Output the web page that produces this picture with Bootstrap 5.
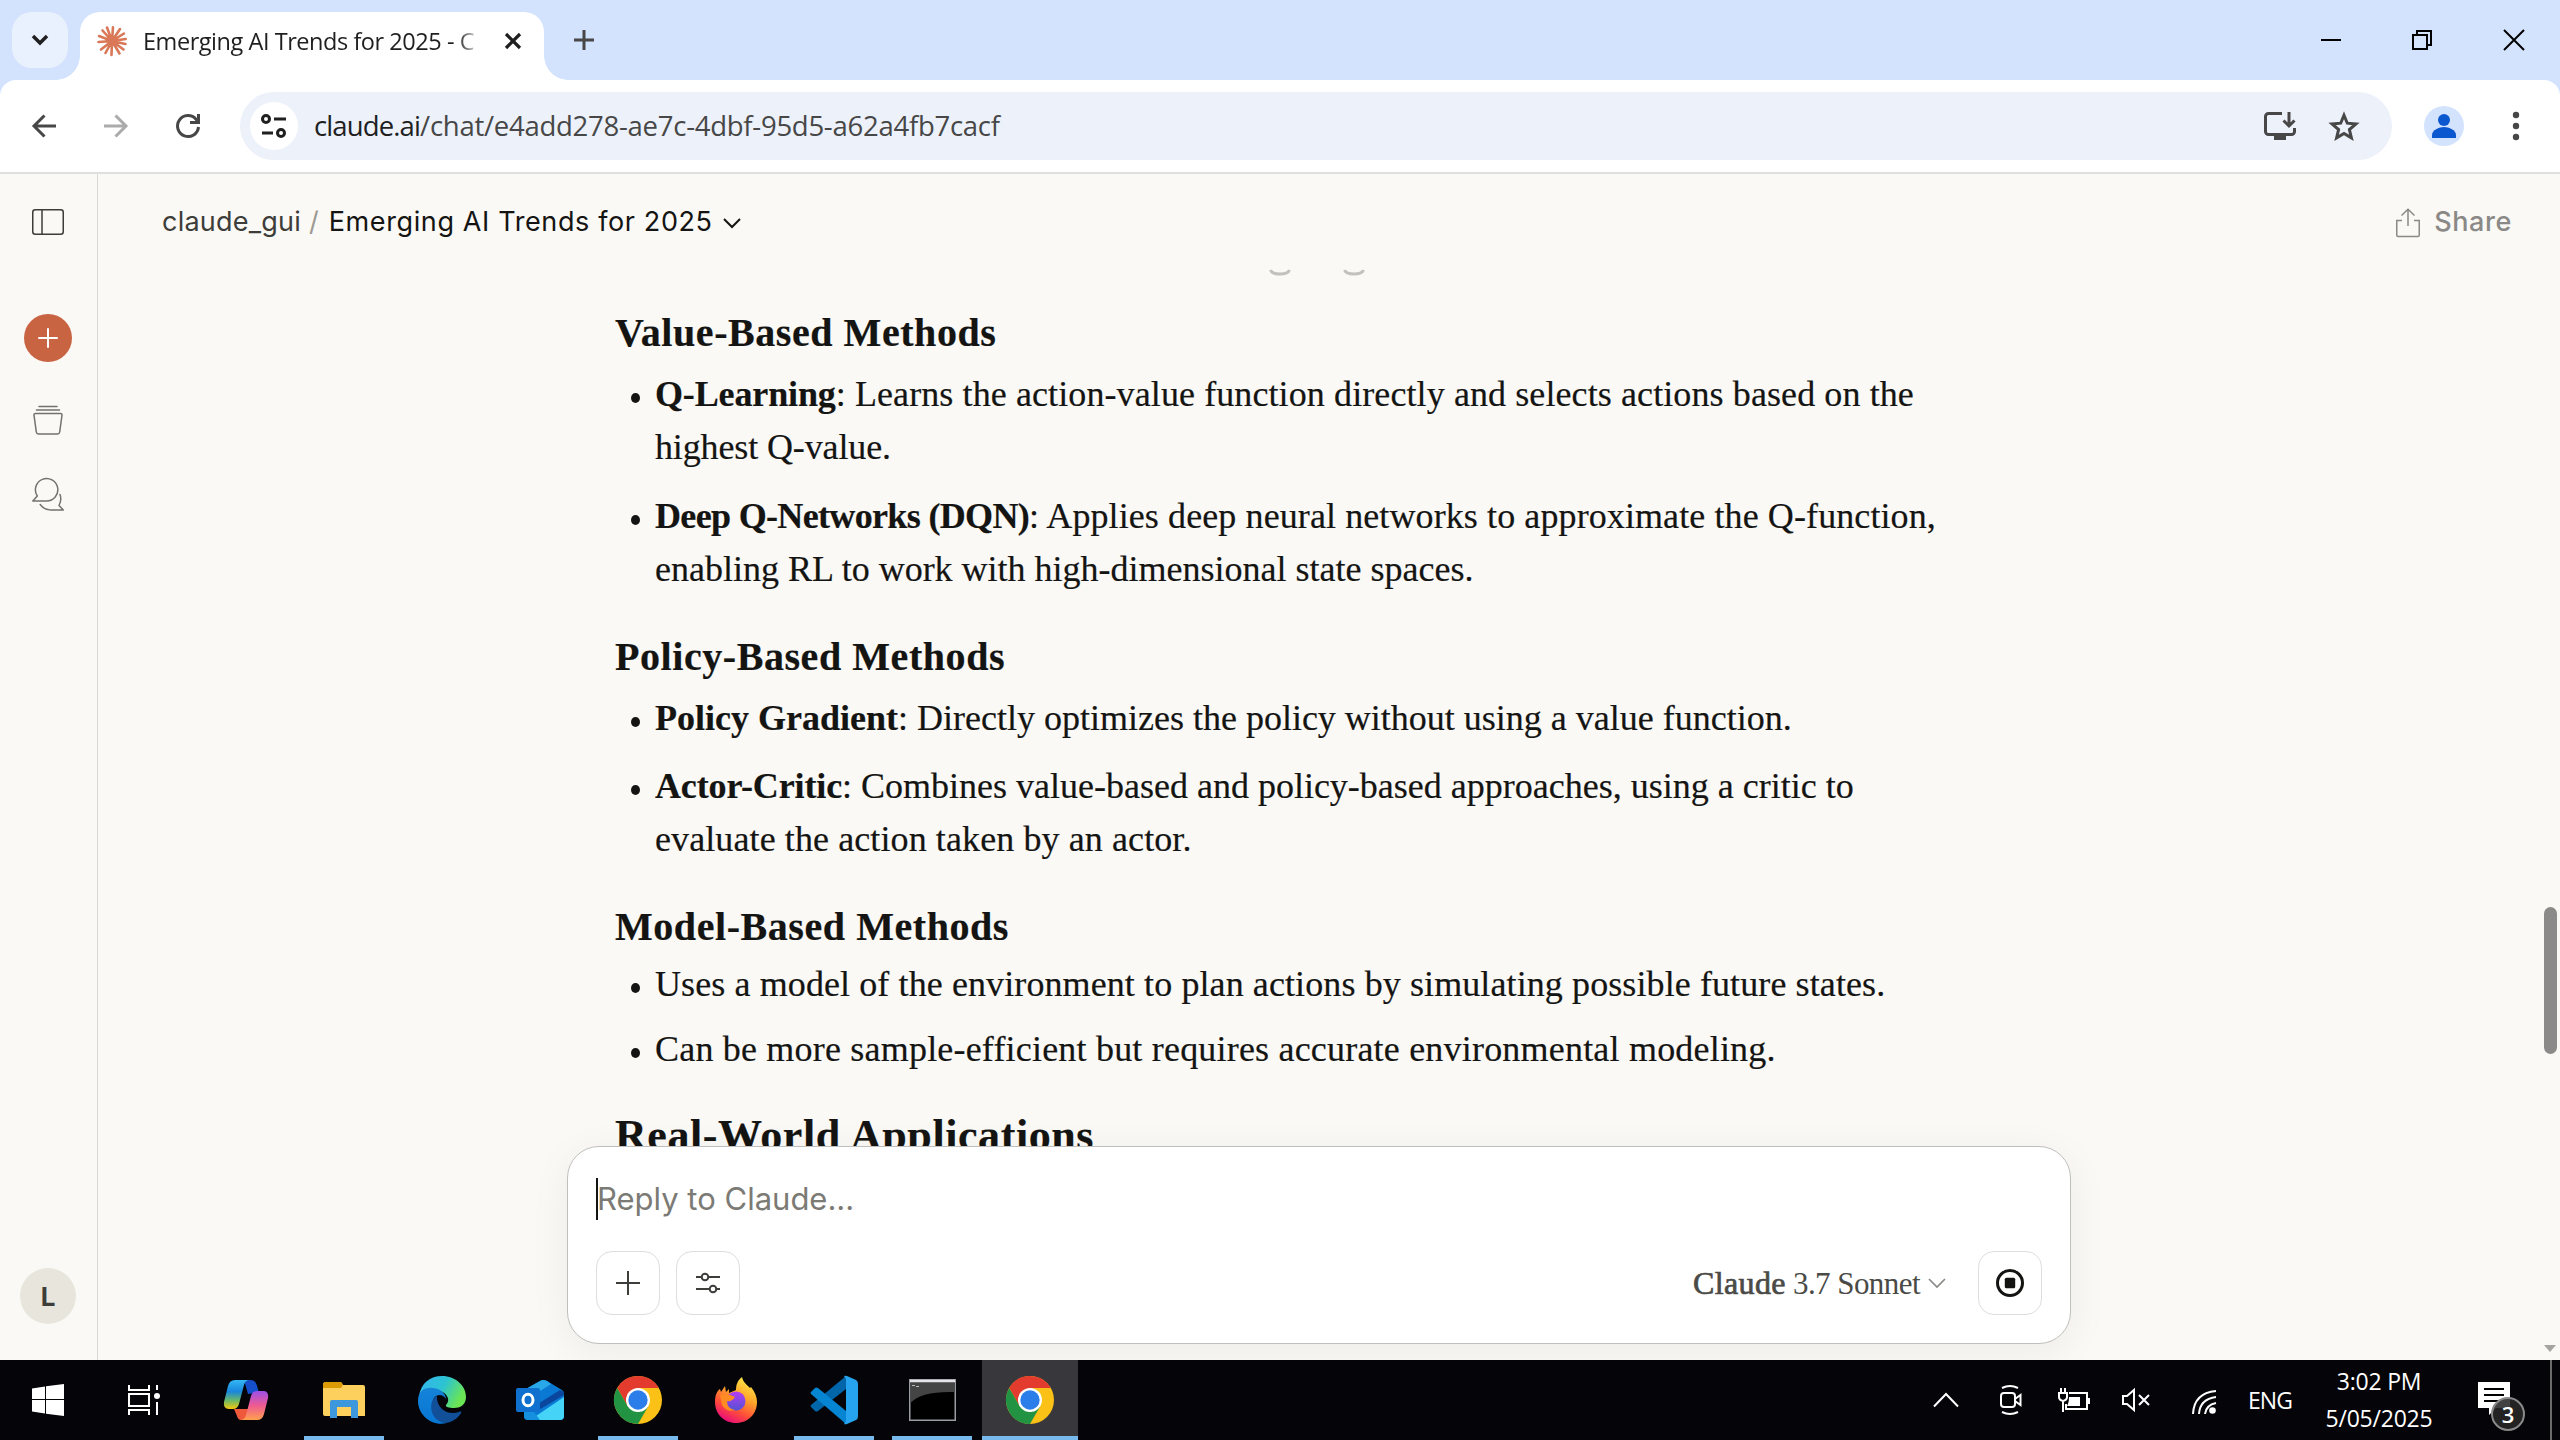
<!DOCTYPE html>
<html lang="en">
<head>
<meta charset="utf-8">
<title>Emerging AI Trends for 2025 - Claude</title>
<link rel="stylesheet" href="https://cdn.jsdelivr.net/npm/bootstrap@5.3.0/dist/css/bootstrap.min.css">
<script src="https://cdn.jsdelivr.net/npm/bootstrap@5.3.0/dist/js/bootstrap.bundle.min.js"></script>
<style>
html,body{height:1440px;width:2560px;overflow:hidden}
body{background:#faf9f5;color:#141413;font-family:"Open Sans","Noto Sans",sans-serif}
svg{display:block;flex:none;overflow:visible}
.fx{flex:none;white-space:nowrap}
.inter{font-family:Inter,sans-serif}
/* browser chrome */
.tabstrip{height:80px;background:#d3e3fd;padding-left:12px}
.tabsearch{width:56px;height:56px;border-radius:20px;background:#eaf1fe}
.wintab{width:464px;height:68px;margin-left:12px;background:#fff;border-radius:20px 20px 0 0;padding:0 23px 11px 17px}
.wintab::before,.wintab::after{content:"";position:absolute;bottom:0;width:24px;height:24px}
.wintab::before{left:-24px;background:radial-gradient(circle at 0 0,transparent 23.5px,#fff 24px)}
.wintab::after{right:-24px;background:radial-gradient(circle at 100% 0,transparent 23.5px,#fff 24px)}
.tabtitle{font-size:23.5px;line-height:34px;width:338px;margin-left:16px;letter-spacing:-.45px;color:#1f1f1f;-webkit-mask-image:linear-gradient(90deg,#000 314px,transparent 338px)}
.newtab{margin-left:30px}
.wincontrols{padding-right:36px;gap:72px}
.bar-wrap{background:#d3e3fd}
.toolbar{height:94px;background:#fff;border-radius:16px 16px 0 0;border-bottom:2px solid #e0e0e0;padding:0 36px 0 32px}
.nav-next{margin-left:48px}
.omni{width:2152px;height:68px;border-radius:34px;background:#ecf1fa;margin-left:40px;padding:0 33px 0 10px}
.site{width:48px;height:48px;background:#fff}
.url{font-size:27.500px;line-height:40px;color:#474747;margin:-1px auto 0 16px;letter-spacing:-.26px}
.url b{font-weight:400;color:#1f1f1f;letter-spacing:-.88px}
.star{margin-left:33px}
.profile{margin-left:32px}
/* application */
.rail{width:98px;border-right:1px solid #d9d8d2;padding:35px 1px 0 0}
.newchat{width:48px;height:48px;background:#c96442;margin-top:79px}
.rail-icon{margin-top:43px}
.avatar{width:56px;height:56px;margin-bottom:36px;background:#e8e6dc;font-size:26px;font-weight:700;color:#3d3d3a}
.apphead{height:97px;padding:0 48px 0 64px;font-size:27px}
.crumb{color:#3d3d3a;letter-spacing:.22px}
.slash{color:#9c9a92;margin:0 10px 0 8px}
.chat-title{letter-spacing:.62px}
.caret{margin-left:10px}
.share{margin-left:14px;font-weight:500;color:#8a8987;letter-spacing:.6px}
.prev-tail{left:1171px;top:96px}
.doc{padding:37px 0 0 517px;font-family:"Liberation Serif",serif;font-size:36px;line-height:53px;-webkit-text-stroke:.2px #141413}
.doc h3{font:700 40px/50px "Liberation Serif",serif;letter-spacing:.56px;margin:0}
.doc h2{font:700 44px/56px "Liberation Serif",serif;letter-spacing:.58px;margin:0}
.doc ul{list-style:none;margin:10px 0 36px;padding-left:40px}
.doc ul.tight{margin:6px 0 32px}
.doc li{position:relative}
.doc li::before{content:"";position:absolute;left:-24px;top:25px;width:9px;height:10px;border-radius:50%;background:#141413}
.doc li+li{margin-top:16px}
.doc ul.policy li+li{margin-top:15px}
.doc ul.tight li+li{margin-top:12px}
.ln{display:block;width:max-content;white-space:nowrap}
.w1{letter-spacing:.1px}.w2{letter-spacing:.2px}.n1{letter-spacing:-.13px}.n2{letter-spacing:-.66px}
.composer{position:absolute;left:469px;top:972px;width:1504px;height:198px;background:#fff;border:1px solid #bfbfbd;border-radius:32px;box-shadow:0 8px 40px rgba(0,0,0,.06);padding:0 28px}
.ph{font-size:31px;line-height:42px;color:#7b7a74;margin-top:31px;border-left:2px solid #141413}
.ph span{margin-left:-1px}
.tools{margin-top:31px}
.cbtn{width:64px;height:64px;border:1px solid #dededc;border-radius:16px;background:#fff}
.model{font-family:"Liberation Serif",serif;font-size:31px;line-height:40px;color:#4a4a47;letter-spacing:-.56px}
.model b{font-size:32px;font-weight:400;letter-spacing:.4px;margin-right:7px;-webkit-text-stroke:.7px #4a4a47}
.model-caret{margin:0 32px 0 8px}
.thumb{position:absolute;left:2446px;top:733px;width:13px;height:147px;border-radius:7px;background:#8b8a88}
.scroll-down{left:2446px;top:1171px}
/* taskbar */
.taskbar{height:80px;background:#040409;color:#fff}
.start{margin-left:32px}
.taskview{margin:0 46px 0 64px}
.app{width:80px;height:80px;margin-right:18px;padding-top:4px;border-bottom:4px solid transparent}
.app.run{border-color:#76b9ed}
.app.now{width:96px;margin-left:-8px;background:#38373c}
.tray{font-size:23px;line-height:37px}
.tray .lang{letter-spacing:-.9px}
.clock{margin:0 45px 0 33px;width:108px;letter-spacing:-.22px}
.notif{width:40px;height:52px}
.notif svg{margin-top:8px}
.bdg{position:absolute;left:13px;top:23px;width:34px;height:34px;border-radius:50%;background:rgba(40,40,40,.88);border:2px solid #8a8a8a;font-size:22px;line-height:30px;text-align:center;font-weight:600}
.showdesk{width:2px;height:80px;background:#6b6b6b;margin:0 8px 0 32px}
.t1{margin-right:41px}.t2{margin-right:36px}.t3{margin-right:32px}.t4{margin-right:42px}.t5{margin:4px 32px 0 0}
</style>
</head>
<body class="d-flex flex-column">
<svg width="0" height="0" class="position-absolute"><defs>
<g id="chrome"><circle cx="24" cy="24" r="24" fill="#fbc116"/><path d="M3.200 12A24 24 0 0 1 44.800 12H24L13.600 30Z" fill="#e33b2e"/><path d="M3.200 12A24 24 0 0 0 24 48L34.400 30 24 36 13.600 30Z" fill="#229342"/><circle cx="24" cy="24" r="12" fill="#fff"/><circle cx="24" cy="24" r="9.700" fill="#2b7de9"/></g>
</defs></svg>

<header>
 <div class="tabstrip d-flex align-items-center">
  <div class="tabsearch d-flex align-items-center justify-content-center"><svg width="16" height="10" fill="none" stroke="#1f1f1f" stroke-width="3.500"><path d="M1 1l7 7 7-7"/></svg></div>
  <div class="wintab position-relative align-self-end d-flex align-items-center">
   <svg width="30" height="30" viewBox="-15 -15 30 30" stroke="#d97757" stroke-width="2.600" stroke-linecap="round"><path d="M0 0L-5-13.500M0 0L1-13.800M0 0L8-12M0 0L12-7.500M0 0L13.700-2M0 0L13.500 3M0 0L11.500 8.500M0 0L7.500 12.500M0 0L-.5 14M0 0L-6.500 12M0 0L-11 8.500M0 0L-13.500 1M0 0L-13-5M0 0L-9.500-10.500"/></svg>
   <div class="tabtitle fx">Emerging AI Trends for 2025 - C</div>
   <svg class="ms-auto" width="16" height="16" stroke="#1f1f1f" stroke-width="3.200"><path d="M1 1l14 14M15 1L1 15"/></svg>
  </div>
  <svg class="newtab" width="20" height="20" stroke="#474747" stroke-width="3"><path d="M10 0v20M0 10h20"/></svg>
  <div class="wincontrols ms-auto d-flex align-items-center">
   <svg width="20" height="20" stroke="#000" stroke-width="2"><path d="M1 10h20"/></svg>
   <svg width="20" height="20" fill="none" stroke="#000" stroke-width="2"><path d="M1 5h14v14H1zM5 5V1h14v14h-4"/></svg>
   <svg width="20" height="20" stroke="#000" stroke-width="2"><path d="M0 0l20 20M20 0L0 20"/></svg>
  </div>
 </div>
 <div class="bar-wrap"><div class="toolbar d-flex align-items-center">
  <svg width="24" height="24" fill="none" stroke="#474747" stroke-width="3"><path d="M24 12H2M12.500 1.500L2 12l10.500 10.500"/></svg>
  <svg class="nav-next" width="24" height="24" fill="none" stroke="#ababab" stroke-width="3"><path d="M0 12h22M11.500 1.500L22 12 11.500 22.500"/></svg>
  <svg class="nav-next" width="24" height="24" fill="none" stroke="#474747" stroke-width="3"><path d="M22.500 13A10.500 10.500 0 1 1 20 5.200L22 8M22.500 0v8.500H14"/></svg>
  <div class="omni d-flex align-items-center">
   <div class="site rounded-circle d-flex align-items-center justify-content-center"><svg width="26" height="24" fill="none" stroke="#1f1f1f" stroke-width="3"><circle cx="5" cy="5" r="3.500"/><path d="M13 5h12M1 19h11"/><circle cx="20" cy="19" r="3.500"/></svg></div>
   <div class="url fx"><b>claude.ai</b>/chat/e4add278-ae7c-4dbf-95d5-a62a4fb7cacf</div>
   <svg width="32" height="28" fill="none" stroke="#474747" stroke-width="3"><path d="M18 1.500H4.500a3 3 0 0 0-3 3v15a3 3 0 0 0 3 3h23a3 3 0 0 0 3-3V16M25 0v14M19.500 8.500L25 14l5.500-5.500"/><path d="M10 23h12v5H10z" fill="#474747" stroke="none"/></svg>
   <svg class="star" width="30" height="29" fill="none" stroke="#474747" stroke-width="3"><path d="M15 3.200l3.300 8 8.600.7-6.500 5.600 2 8.400L15 21.400l-7.400 4.500 2-8.400L3.100 11.900l8.600-.7z"/></svg>
  </div>
  <svg class="profile" width="40" height="40"><circle cx="20" cy="20" r="20" fill="#d3e3fd"/><g fill="#0b57d0"><circle cx="20" cy="14" r="6"/><path d="M8 32v-3c0-5 7-8 12-8s12 3 12 8v3z"/></g></svg>
  <svg width="8" height="30" fill="#474747" class="ms-auto me-1"><circle cx="4" cy="4" r="3.200"/><circle cx="4" cy="15" r="3.200"/><circle cx="4" cy="26" r="3.200"/></svg>
 </div></div>
</header>

<div class="d-flex flex-grow-1 overflow-hidden">
 <nav class="rail fx d-flex flex-column align-items-center">
  <svg width="32" height="26" fill="none" stroke="#3d3d3a" stroke-width="1.500"><rect x=".75" y=".75" width="30.500" height="24.500" rx="2.500"/><path d="M10 1v24"/></svg>
  <div class="newchat rounded-circle d-flex align-items-center justify-content-center"><svg width="20" height="20" stroke="#fff" stroke-width="2" stroke-linecap="round"><path d="M10 1v18M1 10h18"/></svg></div>
  <svg class="rail-icon" width="30" height="30" fill="none" stroke="#73726c" stroke-width="1.500" stroke-linecap="round"><path d="M6 1.500h18M3.500 5h23M2.500 8.500h25q1.700 0 1.500 1.700L26.700 27q-.3 2-2 2H5.300q-1.700 0-2-2L1 10.200Q.8 8.500 2.500 8.500z"/></svg>
  <svg class="rail-icon" width="32" height="33" fill="none" stroke="#73726c" stroke-width="1.500" stroke-linejoin="round" stroke-linecap="round"><path d="M.8 23l4.500-5A11.200 11.200 0 1 1 14.500 23zM28 16.500q2 5-1 11l4.300 4.500H19q-7 0-10.800-5.500"/></svg>
  <div class="avatar inter rounded-circle d-flex align-items-center justify-content-center mt-auto">L</div>
 </nav>
 <main class="position-relative flex-grow-1">
  <div class="apphead inter d-flex align-items-center">
   <span class="crumb fx">claude_gui</span>
   <span class="slash fx">/</span>
   <span class="chat-title fx">Emerging AI Trends for 2025</span>
   <svg class="caret" width="18" height="10" fill="none" stroke="#141413" stroke-width="2"><path d="M1 1l8 8 8-8"/></svg>
   <svg class="ms-auto" width="24" height="30" fill="none" stroke="#8a8987" stroke-width="1.500"><path d="M6 12.500H.75V27a1.500 1.500 0 0 0 1.500 1.500h19.500a1.500 1.500 0 0 0 1.500-1.500V12.500H18M12 18V1.500M5.500 7.500L12 1.200l6.500 6.300"/></svg>
   <span class="share fx">Share</span>
  </div>
  <svg width="96" height="6" class="prev-tail position-absolute" fill="none" stroke="#c2c1bd" stroke-width="3"><path d="M1.500 0Q3 4 11 4T20.500 0M75.500 0Q77 4 85 4T94.500 0"/></svg>
  <article class="doc">
   <h3><span class="ln">Value-Based Methods</span></h3>
   <ul>
    <li><span class="ln"><b class="n1">Q-Learning</b><span class="w1">: Learns the action-value function directly and selects actions based on the</span></span><span class="ln n1">highest Q-value.</span></li>
    <li><span class="ln"><b class="n2">Deep Q-Networks (DQN)</b><span class="w1">: Applies deep neural networks to approximate the Q-function,</span></span><span class="ln">enabling RL to work with high-dimensional state spaces.</span></li>
   </ul>
   <h3><span class="ln">Policy-Based Methods</span></h3>
   <ul class="policy">
    <li><span class="ln"><b>Policy Gradient</b>: Directly optimizes the policy without using a value function.</span></li>
    <li><span class="ln"><b class="n1">Actor-Critic</b>: Combines value-based and policy-based approaches, using a critic to</span><span class="ln w1">evaluate the action taken by an actor.</span></li>
   </ul>
   <h3><span class="ln">Model-Based Methods</span></h3>
   <ul class="tight">
    <li><span class="ln w1">Uses a model of the environment to plan actions by simulating possible future states.</span></li>
    <li><span class="ln w2">Can be more sample-efficient but requires accurate environmental modeling.</span></li>
   </ul>
   <h2><span class="ln">Real-World Applications</span></h2>
  </article>
  <section class="composer">
   <div class="ph inter"><span>Reply to Claude...</span></div>
   <div class="tools d-flex align-items-center">
    <div class="cbtn d-flex align-items-center justify-content-center"><svg width="24" height="24" stroke="#3d3d3a" stroke-width="2"><path d="M12 0v24M0 12h24"/></svg></div>
    <div class="cbtn ms-3 d-flex align-items-center justify-content-center"><svg width="24" height="20" fill="none" stroke="#3d3d3a" stroke-width="2"><path d="M0 4h5.500M12.500 4H24M0 16h13.500M20.500 16H24"/><circle cx="9" cy="4" r="3.300"/><circle cx="17" cy="16" r="3.300"/></svg></div>
    <div class="model fx ms-auto"><b>Claude</b>3.7 Sonnet</div>
    <svg class="model-caret" width="18" height="10" fill="none" stroke="#8a8987" stroke-width="1.700"><path d="M1 1l8 8 8-8"/></svg>
    <div class="cbtn d-flex align-items-center justify-content-center"><svg width="28" height="28"><circle cx="14" cy="14" r="12.500" fill="none" stroke="#141413" stroke-width="3"/><rect x="8.800" y="8.800" width="10.400" height="10.400" rx="1.500" fill="#141413"/></svg></div>
   </div>
  </section>
  <div class="thumb"></div>
  <svg class="scroll-down position-absolute" width="12" height="7"><path d="M0 0h12L6 7z" fill="#a5a4a1"/></svg>
 </main>
</div>

<footer class="taskbar d-flex align-items-center">
 <svg class="start" width="32" height="32" fill="#fff"><path d="M0 4.500L13 2.500V15H0zM14 2.300L32 0v15H14zM0 16h13v13.500L0 27.500zM14 16h18v16l-18-2.300z"/></svg>
 <svg class="taskview" width="32" height="30" fill="none" stroke="#fff" stroke-width="2"><path d="M1 0v5h20V0M1 30v-5h20v5M1 9h20v12H1zM29 0v5M29 17v13"/><circle cx="29" cy="11" r="3" fill="#fff" stroke="none"/></svg>
 <div class="app d-flex align-items-center justify-content-center"><svg width="44" height="40"><defs><linearGradient id="c1" x2="0" y2="1"><stop stop-color="#32b7f5"/><stop offset=".4" stop-color="#1a86dc"/><stop offset=".7" stop-color="#68b868"/><stop offset="1" stop-color="#f5c80c"/></linearGradient><linearGradient id="c2" x2="0" y2="1"><stop stop-color="#9c4fe8"/><stop offset=".5" stop-color="#ee5a91"/><stop offset="1" stop-color="#ffa14d"/></linearGradient></defs><path d="M20 0h6c4 0 6 2 7 6l1.500 5H43L24 14z" fill="#1550ca"/><path d="M10 29h15l-2 7q-1 4-6 4-3 0-4-4z" fill="#f0583c"/><path d="M11 0h13q-3 1-4 5l-5 19q-1.500 5-6 5H5q-6 0-5-7L4 6q1.500-6 7-6z" fill="url(#c1)"/><path d="M33 11h6q6 0 5 7l-4 16q-1.500 6-7 6H17q4-1 5-5l5-19q1.500-5 6-5z" fill="url(#c2)"/></svg></div>
 <div class="app run d-flex align-items-center justify-content-center"><svg width="42" height="36"><path d="M0 10V3q0-3 3-3h14q2 0 3 3h20q2 0 2 2v29H2q-2 0-2-2z" fill="#fdcf5c"/><path d="M0 6V3q0-3 3-3h14q2 0 3 3l-2 3z" fill="#dc9a05"/><path d="M7 36V20q0-2 2-2h24q2 0 2 2v16h-7V25H14v11z" fill="#3d97dd"/></svg></div>
 <div class="app d-flex align-items-center justify-content-center"><svg width="48" height="48"><defs><linearGradient id="e1" x2="1" y2=".4"><stop stop-color="#35b5f0"/><stop offset=".55" stop-color="#2cc3d2"/><stop offset="1" stop-color="#6be554"/></linearGradient><linearGradient id="e2" x2="0" y2="1"><stop stop-color="#1583d8"/><stop offset="1" stop-color="#0776d4"/></linearGradient></defs><path d="M1 20C3 7 12 0 24 0c14 0 24 10 24 21 0 8-6 11-12 11-5 0-9-1-8-3 5-5 1-12-6-14C13 12 5 13 1 20z" fill="url(#e1)"/><path d="M0 25C0 14 8 11 15 12c9 1 13 7 13 11-3-5-9-5-12-1-5 9 2 23 13 25-15 4-29-8-29-22z" fill="url(#e2)"/><path d="M19 20c-9 5-7 20 2 25 8 5 18-1 22-8 1-1 0-2-2-1-10 4-23-3-22-16z" fill="#114f99"/></svg></div>
 <div class="app d-flex align-items-center justify-content-center"><svg width="48" height="40"><path d="M8 10L24 1q3-2 7 0l15 9q2 1 2 4v22q0 4-4 4H12q-4 0-4-4z" fill="#0a79d3"/><path d="M8 10L24 1q3-2 7 0l4 3L15 17H8z" fill="#28a8e8"/><path d="M17 27L44 10q4 1 4 5L21 31z" fill="#0a469d"/><path d="M48 17v19q0 4-4 4H24q-4 0-4-4z" fill="#46d3f8"/><path d="M8 32h10l6 8H12q-4 0-4-4z" fill="#1490df"/><rect y="8" width="24" height="24" rx="2" fill="#1070cf"/><ellipse cx="12" cy="20" rx="5" ry="5.700" fill="none" stroke="#fff" stroke-width="3"/></svg></div>
 <div class="app run d-flex align-items-center justify-content-center"><svg width="48" height="48"><use href="#chrome"/></svg></div>
 <div class="app d-flex align-items-center justify-content-center"><svg width="42" height="46"><defs><linearGradient id="f1" x1=".8" y1="0" x2=".3" y2="1"><stop stop-color="#fff04a"/><stop offset=".4" stop-color="#ffa52a"/><stop offset=".7" stop-color="#ff4f38"/><stop offset="1" stop-color="#e8097d"/></linearGradient><linearGradient id="f2" x2="0" y2="1"><stop stop-color="#b53df5"/><stop offset="1" stop-color="#5452d3"/></linearGradient></defs><path d="M21 13c0-6 2-10 6-13 1 5 5 8 8 11l1-1c4 5 6 10 6 15 0 12-9 21-21 21S0 37 0 25c0-7 2-11 5-13l1 3 4-6 1 6 3-3v4z" fill="url(#f1)"/><circle cx="21" cy="24" r="9.500" fill="url(#f2)"/><path d="M5 18q8-2 15 2-3 5-8 4 0 8 8 9-8 3-13-5z" fill="#ff8b23"/></svg></div>
 <div class="app run d-flex align-items-center justify-content-center"><svg width="48" height="48"><path d="M1 31l4 4q1 1 3 0L36 13V0L1 29q-1 1 0 2z" fill="#0065a9"/><path d="M1 16l4-4q1-1 3 0l28 23v13L1 18q-1-1 0-2z" fill="#0585d2"/><path d="M34 0q1-.5 3 0l9 4q2 1 2 4v32q0 3-2 4l-9 4q-2 .5-3 0l2-3V3z" fill="#26a4f0"/></svg></div>
 <div class="app run d-flex align-items-center justify-content-center"><svg width="47" height="42"><rect x=".75" y=".75" width="45.500" height="40.500" fill="#000" stroke="#9a9ca3" stroke-width="1.500"/><path d="M1.500 3h44v10Q12 12 1.500 24z" fill="#444"/><path d="M1 2h45" stroke="#e4e4e8" stroke-width="2.500"/><path d="M3 6.500h3M7 7.500h3" stroke="#bbb"/></svg></div>
 <div class="app run now d-flex align-items-center justify-content-center"><svg width="48" height="48"><use href="#chrome"/></svg></div>
 <div class="tray ms-auto d-flex align-items-center">
  <svg class="t1" width="26" height="14" fill="none" stroke="#fff" stroke-width="2"><path d="M1 13.500L13 1l12 12.500"/></svg>
  <svg class="t2" width="22" height="30" fill="none" stroke="#fff" stroke-width="2"><rect x="1" y="8" width="14" height="14" rx="3"/><path d="M15 14l5.500-4v10L15 16M2 3q8-4 16 0M2 27q8 4 16 0"/></svg>
  <svg class="t3" width="32" height="24" fill="none" stroke="#fff" stroke-width="2"><path d="M11 5h18v16H8v-5M31 10v6M3 0v5M7 0v5M1 5h8v4q0 3-4 4-4-1-4-4zM5 13v11"/><path d="M11 9h11v9H9q2-3 2-9z" fill="#fff" stroke="none"/></svg>
  <svg class="t4" width="28" height="24" fill="none" stroke="#fff" stroke-width="2"><path d="M1 8h4l7-6v20l-7-6H1zM17 7l10 10M27 7L17 17"/></svg>
  <svg class="t5" width="24" height="24" fill="none" stroke="#fff" stroke-width="2"><path d="M1 24Q2 3 24 1M7 24Q8 9 24 7M13 24q1-9 11-11"/><circle cx="20.500" cy="20.500" r="3.300" fill="#fff" stroke="none"/></svg>
  <span class="lang fx">ENG</span>
  <div class="clock text-center fx"><div>3:02 PM</div><div>5/05/2025</div></div>
  <div class="notif position-relative"><svg width="32" height="36"><path d="M0 0h32v26H18l-7 7v-7H0z" fill="#fff"/><path d="M6 7h20M6 13h20M6 19h14" stroke="#000" stroke-width="2"/></svg><span class="bdg">3</span></div>
  <div class="showdesk"></div>
 </div>
</footer>
</body>
</html>
